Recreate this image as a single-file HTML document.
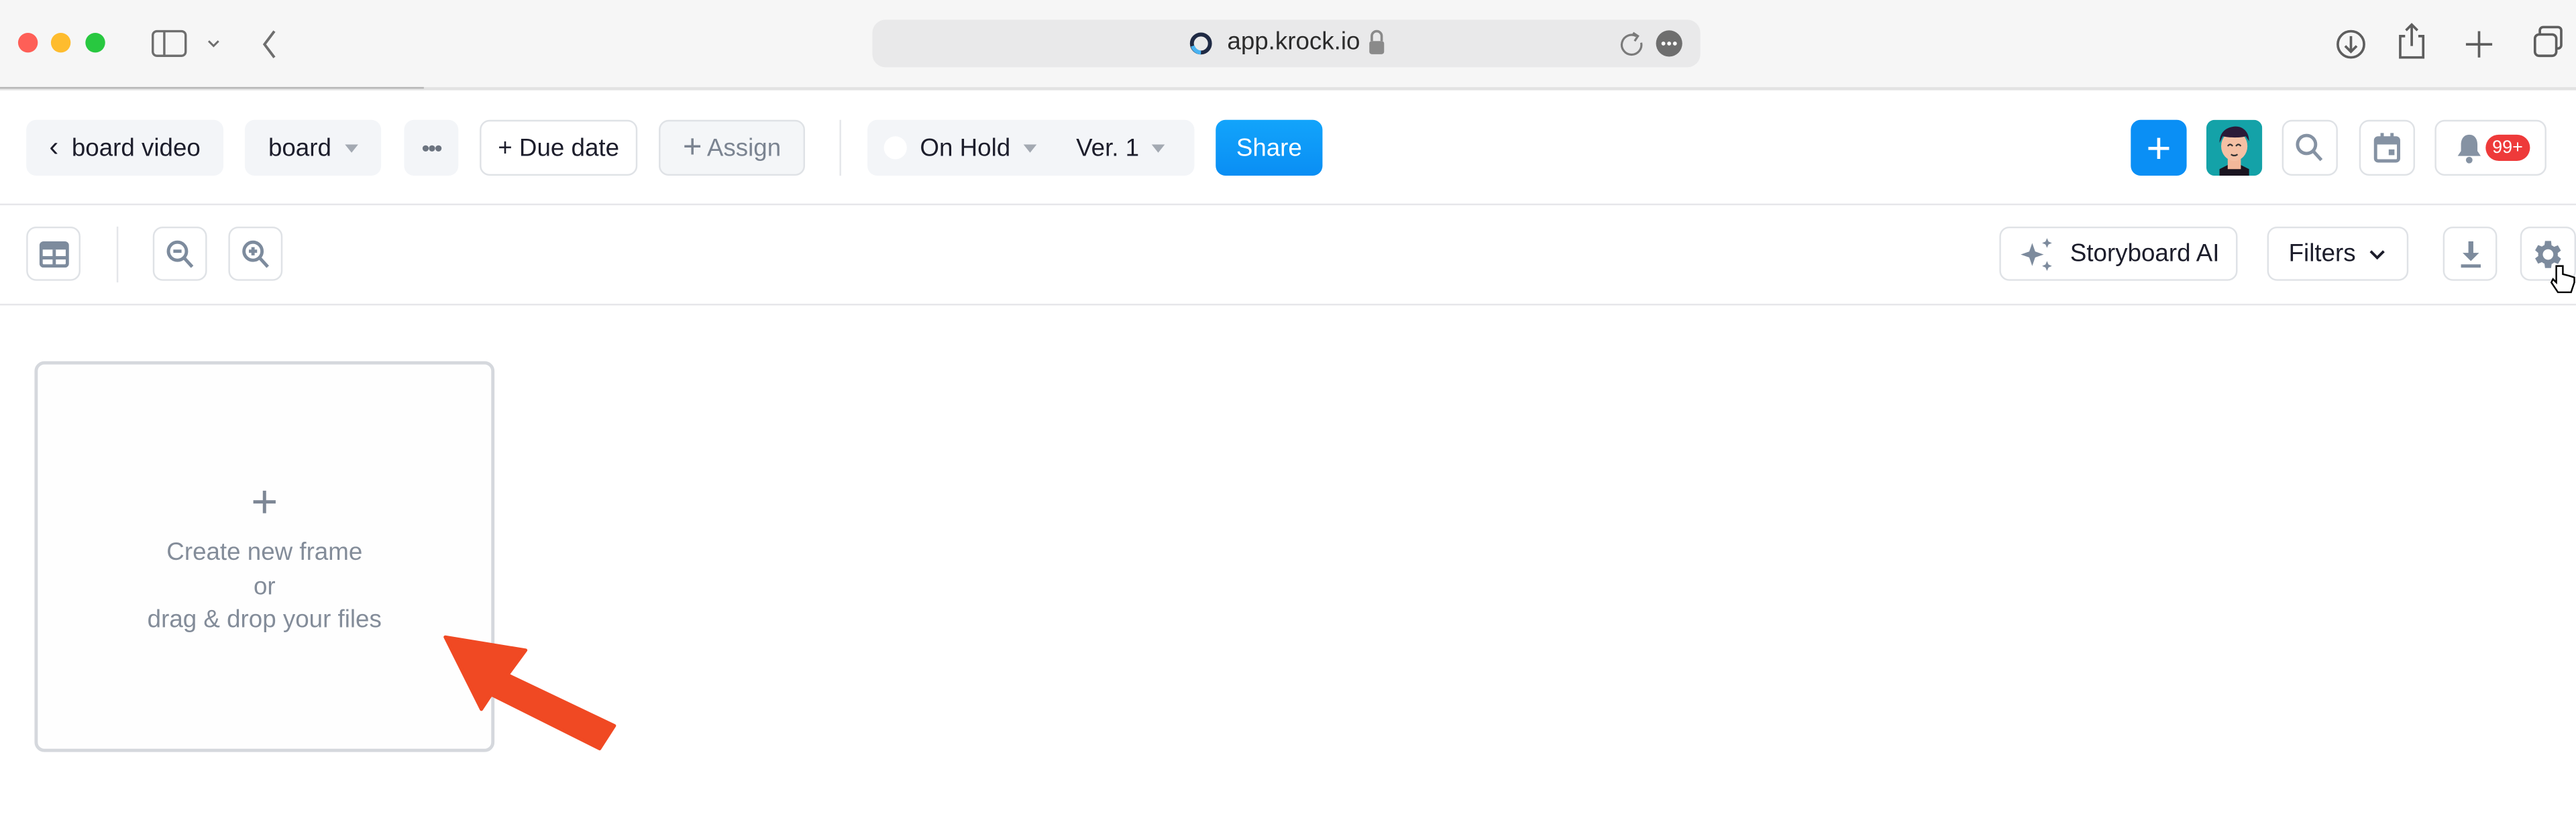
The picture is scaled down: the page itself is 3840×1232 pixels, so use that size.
<!DOCTYPE html>
<html><head><meta charset="utf-8"><style>
html,body{margin:0;padding:0;background:#fff;overflow:hidden}
body{width:3840px;height:1230px;font-family:"Liberation Sans",sans-serif}
#w{position:absolute;left:0;top:0;width:1568px;height:503px;transform:scale(2.44898);transform-origin:0 0}
.a{position:absolute}
.btn{position:absolute;top:73px;height:34px;border-radius:6px;box-sizing:border-box;display:flex;align-items:center;justify-content:center;font-size:15px;color:#1c1d2b}
.g{background:#f3f5f8}
.o{background:#fff;border:1px solid #dfe2e6}
.b2{top:138px;height:33px}
.car{display:inline-block;width:0;height:0;border-left:4px solid transparent;border-right:4px solid transparent;border-top:5px solid #a3a9b2;margin-left:8px}
</style></head><body><div id="w">
<div class="a" style="left:0;top:0;width:1568px;height:53px;background:#f6f6f6"></div>
<div class="a" style="left:0;top:53px;width:1568px;height:2px;background:#e3e3e3"></div>
<div class="a" style="left:0;top:53px;width:258px;height:1px;background:#b5b5b5"></div>
<div class="a" style="left:11px;top:20px;width:12px;height:12px;border-radius:50%;background:#fe5f57"></div>
<div class="a" style="left:31px;top:20px;width:12px;height:12px;border-radius:50%;background:#febc2e"></div>
<div class="a" style="left:52px;top:20px;width:12px;height:12px;border-radius:50%;background:#28c840"></div>
<svg class="a" style="left:90px;top:15px" width="90" height="24" viewBox="0 0 90 24" fill="none" stroke="#6e6e6e" stroke-width="1.4">
<rect x="3" y="4" width="20" height="15" rx="2.5"/><line x1="10" y1="4" x2="10" y2="19"/>
<path d="M37 10l3 3 3-3" stroke-width="1.2"/><path d="M77 4l-6 8 6 8" stroke-width="1.6"/></svg>
<div class="a" style="left:531px;top:12px;width:504px;height:29px;border-radius:8px;background:#e9e9ea"></div>
<svg class="a" style="left:723px;top:18px" width="16" height="17" viewBox="0 0 16 17"><circle cx="8" cy="8.5" r="5.5" fill="none" stroke="#1f2a44" stroke-width="2.4"/><path d="M3 10a5.5 5.5 0 0 0 5 4" stroke="#49b3f2" stroke-width="2.4" fill="none"/></svg>
<div class="a" style="left:747px;top:17px;font-size:15px;color:#2c2c2c">app.krock.io</div>
<svg class="a" style="left:832px;top:17px" width="12" height="17" viewBox="0 0 12 17"><path d="M3 8V5a3 3 0 0 1 6 0v3" stroke="#8a8a8a" stroke-width="1.5" fill="none"/><rect x="1.5" y="8" width="9" height="8" rx="1.5" fill="#8a8a8a"/></svg>
<svg class="a" style="left:984px;top:17px" width="44" height="20" viewBox="0 0 44 20"><path d="M12 5a6 6 0 1 0 3 4" stroke="#7a7a7a" stroke-width="1.3" fill="none"/><path d="M10 3l3 2-2 3" stroke="#7a7a7a" stroke-width="1.3" fill="none"/><circle cx="32" cy="9.5" r="8" fill="#6e6e6e"/><circle cx="28.5" cy="9.5" r="1.2" fill="#fff"/><circle cx="32" cy="9.5" r="1.2" fill="#fff"/><circle cx="35.5" cy="9.5" r="1.2" fill="#fff"/></svg>
<svg class="a" style="left:1420px;top:12px" width="145" height="30" viewBox="0 0 145 30" fill="none" stroke="#5e5e5e" stroke-width="1.5">
<circle cx="11" cy="15" r="8"/><path d="M11 10v9M7.5 16l3.5 3.5 3.5-3.5"/>
<path d="M44 10h-3v13h14V10h-3M48 3v13M44.5 6.5L48 3l3.5 3.5"/>
<path d="M89 7v16M81 15h16"/>
<rect x="123" y="9" width="13" height="13" rx="2.5"/><path d="M126 9V6.5a2 2 0 0 1 2-2h9a2 2 0 0 1 2 2v9a2 2 0 0 1-2 2h-1"/></svg>
<div class="a" style="left:0;top:124px;width:1568px;height:1px;background:#e6e6ea"></div>
<div class="btn g" style="left:16px;width:120px"><span style="font-size:17px;margin-right:8px">&#8249;</span>board video</div>
<div class="btn g" style="left:149px;width:83px">board<span class="car"></span></div>
<div class="btn g" style="left:246px;width:33px;color:#6c7480;font-size:14px;letter-spacing:-1px">•••</div>
<div class="btn o" style="left:292px;width:96px">+ Due date</div>
<div class="btn o" style="left:401px;width:89px;background:#f4f6f8;color:#7b8491"><span style="font-size:20px;margin-right:3px;font-weight:300">+</span>Assign</div>
<div class="a" style="left:511px;top:73px;width:1px;height:34px;background:#e4e6ea"></div>
<div class="btn g" style="left:528px;width:199px;justify-content:flex-start;padding-left:10px"><span style="width:14px;height:14px;border-radius:50%;background:#fff;margin-right:8px"></span>On Hold<span class="car"></span><span style="margin-left:24px">Ver. 1</span><span class="car"></span></div>
<div class="btn" style="left:740px;width:65px;background:linear-gradient(#12a4fb,#0a8ef4);color:#fff">Share</div>
<div class="btn" style="left:1297px;width:34px;background:#0a8ff5;color:#fff;font-size:26px;font-weight:300">+</div>
<svg class="a" style="left:1343px;top:73px" width="34" height="34" viewBox="0 0 34 34"><rect width="34" height="34" rx="5" fill="#14a2a8"/><path d="M8 34v-4l6-3h6l6 3v4z" fill="#1a1420"/><rect x="13" y="22" width="8" height="8" fill="#f2b79a"/><ellipse cx="17" cy="16" rx="8" ry="9" fill="#f4c0a4"/><path d="M8 14c0-8 6-10 10-10s8 3 8 9l-2-3c-3 1-10 1-14 0z" fill="#2a1a38"/><path d="M13 16q1.5-2 3 0M18 16q1.5-2 3 0M15 21q2 1.5 4 0" stroke="#333" stroke-width=".9" fill="none"/></svg>
<div class="btn o" style="left:1389px;width:34px"><svg width="20" height="20" viewBox="0 0 20 20" fill="none" stroke="#8592a3" stroke-width="2"><circle cx="8" cy="8" r="5.5"/><path d="M12 12l5 5.5"/></svg></div>
<div class="btn o" style="left:1436px;width:34px"><svg width="18" height="20" viewBox="0 0 18 20"><rect x="2" y="4" width="14" height="14" rx="1.5" fill="none" stroke="#8592a3" stroke-width="2"/><rect x="2" y="4" width="14" height="4" fill="#8592a3"/><rect x="5" y="1" width="2" height="4" fill="#8592a3"/><rect x="11" y="1" width="2" height="4" fill="#8592a3"/><rect x="10" y="11" width="3.5" height="3.5" fill="#8592a3"/></svg></div>
<div class="btn o" style="left:1482px;width:68px;justify-content:flex-start;padding-left:12px"><svg width="16" height="20" viewBox="0 0 16 20"><path d="M8 2c3.5 0 5 3 5 6v4l2 3H1l2-3V8c0-3 1.5-6 5-6z" fill="#8592a3"/><circle cx="8" cy="17.5" r="2" fill="#8592a3"/></svg><span style="margin-left:2px;background:#ee3a3a;color:#fff;font-size:11px;border-radius:9px;padding:2px 4px">99+</span></div>
<div class="a" style="left:0;top:185px;width:1568px;height:1px;background:#e6e6ea"></div>
<div class="btn o b2" style="left:16px;width:33px"><svg width="18" height="16" viewBox="0 0 18 16"><rect x="1" y="1" width="16" height="14" rx="1.5" fill="none" stroke="#7d8b9d" stroke-width="2"/><rect x="1" y="1" width="16" height="4" fill="#7d8b9d"/><path d="M9 5v10M1 10h16" stroke="#7d8b9d" stroke-width="2"/></svg></div>
<div class="a" style="left:71px;top:138px;width:1px;height:34px;background:#e4e6ea"></div>
<div class="btn o b2" style="left:93px;width:33px"><svg width="20" height="20" viewBox="0 0 20 20" fill="none" stroke="#7d8b9d" stroke-width="2"><circle cx="8" cy="8" r="5.5"/><path d="M12 12l5 5.5M5.5 8h5"/></svg></div>
<div class="btn o b2" style="left:139px;width:33px"><svg width="20" height="20" viewBox="0 0 20 20" fill="none" stroke="#7d8b9d" stroke-width="2"><circle cx="8" cy="8" r="5.5"/><path d="M12 12l5 5.5M5.5 8h5M8 5.5v5"/></svg></div>
<div class="btn o b2" style="left:1217px;width:145px"><svg width="24" height="24" viewBox="0 0 24 24" fill="#7d8b9d" style="margin-right:8px"><path d="M9 5l1.8 5.2L16 12l-5.2 1.8L9 19l-1.8-5.2L2 12l5.2-1.8z"/><path d="M18 2l.9 2.1L21 5l-2.1.9L18 8l-.9-2.1L15 5l2.1-.9zM18 16l.9 2.1 2.1.9-2.1.9L18 22l-.9-2.1L15 19l2.1-.9z"/></svg>Storyboard AI</div>
<div class="btn o b2" style="left:1380px;width:86px">Filters<svg width="12" height="8" viewBox="0 0 12 8" style="margin-left:7px"><path d="M2 2l4 4 4-4" stroke="#1c1d2b" stroke-width="1.6" fill="none"/></svg></div>
<div class="btn o b2" style="left:1487px;width:33px"><svg width="16" height="20" viewBox="0 0 16 20" fill="#7d8b9d"><path d="M6.5 2h3v7h3.5L8 14 3 9h3.5z"/><rect x="2" y="16" width="12" height="2"/></svg></div>
<div class="btn o b2" style="left:1534px;width:34px"><svg width="22" height="22" viewBox="0 0 24 24"><path fill="#7d8b9d" d="M19.4 13a7.5 7.5 0 0 0 0-2l2.1-1.6-2-3.5-2.5 1a7 7 0 0 0-1.7-1L15 3h-4l-.4 2.7a7 7 0 0 0-1.7 1l-2.5-1-2 3.5L6.5 11a7.5 7.5 0 0 0 0 2l-2.1 1.6 2 3.5 2.5-1a7 7 0 0 0 1.7 1L11 21h4l.4-2.7a7 7 0 0 0 1.7-1l2.5 1 2-3.5zM13 15.5a3.5 3.5 0 1 1 0-7 3.5 3.5 0 0 1 0 7z" transform="translate(-1 0)"/></svg></div>
<svg class="a" style="left:1552px;top:160px" width="16" height="22" viewBox="0 0 16 22"><path d="M4 2v10l-2-2-1 2 4 6h8l2-6V9l-3-1-2-.5L8 7V2z" fill="#fff" stroke="#000" stroke-width="1"/></svg>
<div class="a" style="left:21px;top:220px;width:280px;height:238px;box-sizing:border-box;border:2px solid #d5d8dd;border-radius:6px;background:#fefefe"></div>
<div class="a" style="left:21px;top:291px;width:280px;text-align:center;font-size:28px;font-weight:300;color:#7d8795;line-height:30px">+</div>
<div class="a" style="left:21px;top:327px;width:280px;text-align:center;font-size:15px;color:#838c99;line-height:20.5px">Create new frame<br>or<br>drag &amp; drop your files</div>
<svg class="a" style="left:0;top:0" width="1568" height="503"><path d="M271 388L320 396L309 411L374 442L365 456L299 423L293 432Z" fill="#f04923" stroke="#f04923" stroke-width="2" stroke-linejoin="round"/></svg>
</div></body></html>
